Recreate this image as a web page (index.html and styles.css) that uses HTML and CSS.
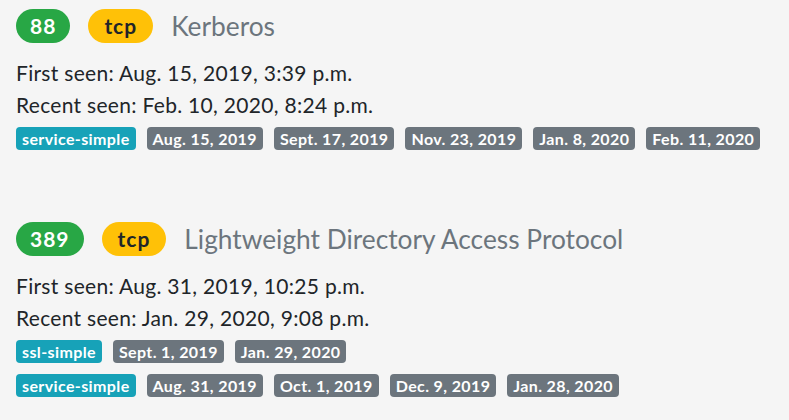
FILE: index.html
```html
<!DOCTYPE html>
<html lang="en">
<head>
  <meta charset="UTF-8">
  <meta name="viewport" content="width=device-width, initial-scale=1">
  <title>Services</title>
  <link rel="stylesheet" href="styles.css">
</head>
<body>

  <div class="service">
    <div class="service-head">
      <span class="pill pill-port">88</span>
      <span class="pill pill-proto">tcp</span>
      <span class="service-name">Kerberos</span>
    </div>
    <div class="seen">First seen: Aug. 15, 2019, 3:39 p.m.</div>
    <div class="seen">Recent seen: Feb. 10, 2020, 8:24 p.m.</div>
    <div class="tag-rows">
      <div class="tag-row">
        <span class="tag tag-type">service-simple</span>
        <span class="tag">Aug. 15, 2019</span>
        <span class="tag">Sept. 17, 2019</span>
        <span class="tag">Nov. 23, 2019</span>
        <span class="tag">Jan. 8, 2020</span>
        <span class="tag">Feb. 11, 2020</span>
      </div>
    </div>
  </div>

  <div class="service">
    <div class="service-head">
      <span class="pill pill-port">389</span>
      <span class="pill pill-proto">tcp</span>
      <span class="service-name">Lightweight Directory Access Protocol</span>
    </div>
    <div class="seen">First seen: Aug. 31, 2019, 10:25 p.m.</div>
    <div class="seen">Recent seen: Jan. 29, 2020, 9:08 p.m.</div>
    <div class="tag-rows">
      <div class="tag-row">
        <span class="tag tag-type">ssl-simple</span>
        <span class="tag">Sept. 1, 2019</span>
        <span class="tag">Jan. 29, 2020</span>
      </div>
      <div class="tag-row">
        <span class="tag tag-type">service-simple</span>
        <span class="tag">Aug. 31, 2019</span>
        <span class="tag">Oct. 1, 2019</span>
        <span class="tag">Dec. 9, 2019</span>
        <span class="tag">Jan. 28, 2020</span>
      </div>
    </div>
  </div>

</body>
</html>
```

FILE: styles.css
```css
body {
  font-family: 'Lato', sans-serif;
  margin: 0;
  padding: 9px 16px;
  background: #f5f5f5;
  color: #212529;
}
.service {
  margin-bottom: 72px;
}
.service:last-child {
  margin-bottom: 0;
}
.service-head {
  display: flex;
  align-items: center;
  gap: 18px;
  height: 34px;
  margin-bottom: 14px;
}
.pill {
  height: 34px;
  line-height: 34px;
  padding: 0 14px;
  border-radius: 17px;
  font-size: 21px;
  font-weight: 700;
  letter-spacing: 1px;
}
.pill-port {
  background: #28a745;
  color: #ffffff;
}
.pill-proto {
  padding: 0 16px;
  background: #ffc107;
  color: #212529;
}
.service-name {
  font-size: 26.3px;
  color: #6c757d;
}
.seen {
  font-size: 21px;
  line-height: 32px;
  letter-spacing: 0.3px;
}
.tag-rows {
  display: flex;
  flex-direction: column;
  gap: 11px;
  margin-top: 6px;
}
.tag-row {
  display: flex;
  gap: 11px;
}
.tag {
  height: 23px;
  line-height: 23px;
  padding: 0 6px;
  border-radius: 4px;
  background: #6c757d;
  color: #ffffff;
  font-size: 16px;
  font-weight: 700;
  letter-spacing: 0.38px;
}
.tag-type {
  background: #17a2b8;
}
```
